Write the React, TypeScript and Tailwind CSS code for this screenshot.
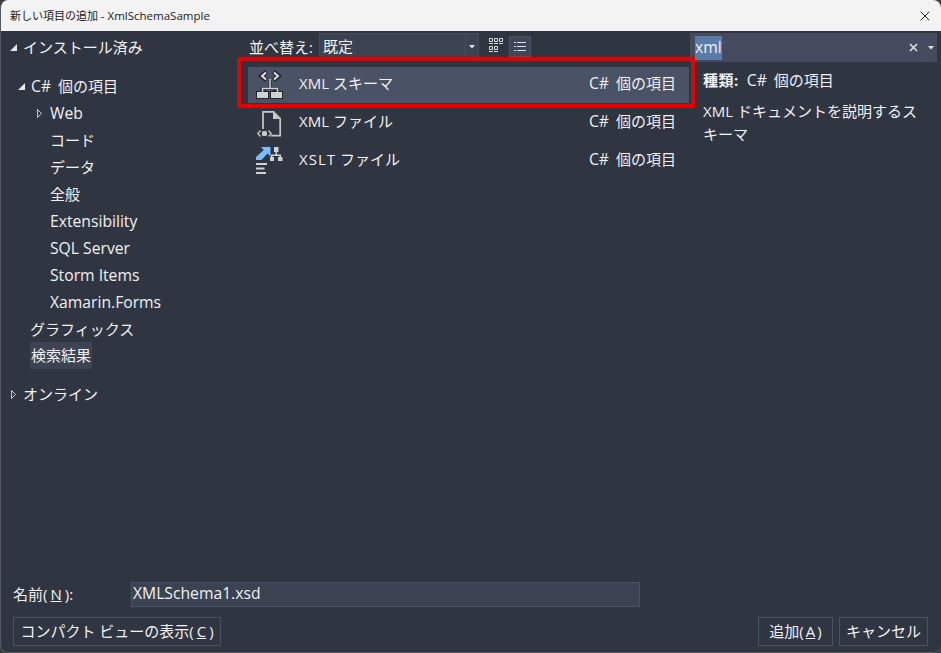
import type { ReactNode } from "react";
import { X } from "lucide-react";

const font = { fontFamily: '"Open Sans", "Noto Sans CJK JP", sans-serif' };

function Tri({ open }: { open?: boolean }) {
  if (open) {
    return (
      <svg width="9" height="9" viewBox="0 0 9 9" className="shrink-0">
        <path d="M8 1V8H1Z" fill="#e6e8ec" />
      </svg>
    );
  }
  return (
    <svg width="7" height="11" viewBox="0 0 7 11" className="shrink-0">
      <path d="M1.500 1.500L5.500 5.500L1.500 9.500Z" fill="none" stroke="#c9ccd2" strokeWidth="1" />
    </svg>
  );
}

// latin runs sit slightly wider than the CJK text around them
function Latin({ children }: { children: ReactNode }) {
  return <span className="text-[15.7px]">{children}</span>;
}

function CsItems() {
  return (
    <span>
      <Latin>C#</Latin>
      <span className="ml-[7px]">個の項目</span>
    </span>
  );
}

function TreeItem({ label, selected }: { label: ReactNode; selected?: boolean }) {
  return (
    <div className="h-[27px] pl-[49px] flex items-center text-[15px] text-[#f1f1f1]">
      {selected ? <span className="bg-[#3d4353] px-px h-[27px] -ml-5 flex items-center">{label}</span> : label}
    </div>
  );
}

function SchemaIcon() {
  return (
    <svg width="30" height="30" viewBox="0 0 30 30">
      <path d="M1 29V21H5.500V17.500H13.500V10H16.500V17.500H24V21H28V29H15V21H18V20H11V21H14V29Z" fill="#23262f" />
      <path d="M11.500 1.800L6.500 6L11.500 10.200M18.500 1.800L23.500 6L18.500 10.200" fill="none" stroke="#23262f" strokeWidth="4.500" />
      <path d="M2 22H13V28H2ZM16 22H27V28H16Z" fill="#d2d2d2" />
      <path d="M15 9V18.500M7.500 22V18.500H22.500V22" fill="none" stroke="#d2d2d2" strokeWidth="1.500" />
      <path d="M11 2.500L7 6L11 9.500M19 2.500L23 6L19 9.500" fill="none" stroke="#e0e0e0" strokeWidth="2" />
    </svg>
  );
}

function FileIcon() {
  return (
    <svg width="30" height="30" viewBox="0 0 30 30">
      <path d="M8 22V4.800H18.500L25.200 11.500V28.700H16" fill="none" stroke="#c8c8c8" strokeWidth="1.700" />
      <path d="M18 5V12H25Z" fill="#c8c8c8" />
      <path d="M5.500 23.500L2.800 26.500L5.500 29.500M13.500 23.500L16.200 26.500L13.500 29.500" fill="none" stroke="#c8c8c8" strokeWidth="1.300" />
      <rect x="7" y="24" width="5" height="5" rx="1.500" fill="#c8c8c8" />
    </svg>
  );
}

function XsltIcon() {
  return (
    <svg width="30" height="30" viewBox="0 0 30 30">
      <path d="M6 2H15.500V11.500L12.500 8.500L6.500 15H1V12L8.800 5Z" fill="#75beff" />
      <path d="M19 2H23.500V7H22V9.500H26V12H27.500V16H23V12H24.500V11H17.500V12H19V16H15V12H16V9.500H20.500V7H19Z" fill="#d2d2d2" />
      <path d="M1 18H12V20H1ZM1 22.500H9.500V24.500H1ZM1 27H11V29H1Z" fill="#d2d2d2" />
    </svg>
  );
}

function TemplateRow({ icon, name, selected, height }: { icon: ReactNode; name: ReactNode; selected?: boolean; height: string }) {
  return (
    <div className={"flex items-center text-[15px] text-[#f1f1f1] pl-[7px] pr-[13px] " + height + " " + (selected ? "bg-[#4a5265]" : "")}>
      <div className="w-[30px] h-[30px] shrink-0">{icon}</div>
      <span className={"ml-[14px] " + (selected ? "-mt-[4px]" : "-mt-[2px]")}>{name}</span>
      <span className={"ml-auto " + (selected ? "-mt-[3px]" : "mt-0")}>
        <CsItems />
      </span>
    </div>
  );
}

function CaretDown() {
  return (
    <svg width="6" height="4" viewBox="0 0 6 4">
      <path d="M0 0H6L3 3.500Z" fill="#e0e0e0" />
    </svg>
  );
}

export default function App() {
  return (
    <div className="w-[941px] h-[653px] bg-[#3b3d42]" style={font}>
      <div className="w-full h-full rounded-lg overflow-hidden border-l border-b border-[#565a63] flex flex-col bg-[#2f3541] relative">
        <div className="h-[31px] bg-[#f3f3f3] flex items-center pl-[9px] pr-[8px] text-[#1b1b1b] text-[11px] shrink-0">
          <span>
            新しい項目の追加 <span className="text-[11.5px]">- XmlSchemaSample</span>
          </span>
          <X className="ml-auto" size={16} strokeWidth={1.500} color="#222" />
        </div>

        <div className="flex flex-1 min-h-0">
          <div className="w-[238px] shrink-0 pt-[3px]">
            <div className="h-[27px] flex items-center pl-[8px] gap-[5px] text-[15px] text-[#f1f1f1]">
              <Tri open />
              インストール済み
            </div>
            <div className="h-[27px] mt-[12px] flex items-center pl-[16px] gap-[5px] text-[15px] text-[#f1f1f1]">
              <Tri open />
              <CsItems />
            </div>
            <div className="h-[27px] flex items-center pl-[35px] gap-[7px] text-[15px] text-[#f1f1f1]">
              <Tri />
              <Latin>Web</Latin>
            </div>
            <TreeItem label="コード" />
            <TreeItem label="データ" />
            <TreeItem label="全般" />
            <TreeItem label={<Latin>Extensibility</Latin>} />
            <TreeItem label={<Latin>SQL Server</Latin>} />
            <TreeItem label={<Latin>Storm Items</Latin>} />
            <TreeItem label={<Latin>Xamarin.Forms</Latin>} />
            <div className="h-[26px] pl-[29px] flex items-center text-[15px] text-[#f1f1f1]">グラフィックス</div>
            <TreeItem label="検索結果" selected />
            <div className="h-[27px] mt-[12px] flex items-center pl-[9px] gap-[6px] text-[15px] text-[#f1f1f1]">
              <Tri />
              オンライン
            </div>
          </div>

          <div className="w-[451px] shrink-0">
            <div className="h-[36px] flex items-start pt-[2px] text-[15px] text-[#f1f1f1]">
              <span className="ml-[10px] mt-[3px]">並べ替え:</span>
              <div className="ml-[6px] w-[160px] h-[28px] border border-[#454c5e] bg-[#3b4252] flex items-center">
                <span className="pl-[3px] flex-1 -mt-[2px]">既定</span>
                <div className="w-[13px] h-full border-l border-[#454c5e] flex items-center justify-center">
                  <CaretDown />
                </div>
              </div>
              <div className="ml-[7px] mt-[2px] w-[21px] h-[21px] flex items-center justify-center">
                <svg width="14" height="15" viewBox="0 0 14 15">
                  <path d="M.5 .5h3v3h-3zM5.500 .5h3v3h-3zM10.500 .5h3v3h-3zM.5 8.500h3v3h-3zM5.500 8.500h3v3h-3z" fill="none" stroke="#d8d8d8" strokeWidth="1" />
                  <path d="M0 5h4v1H0zM5 5h4v1H5zM10 5h4v1h-4zM0 13h4v1H0zM5 13h4v1H5z" fill="#d8d8d8" />
                </svg>
              </div>
              <div className="ml-[2px] mt-[3px] w-[22px] h-[21px] bg-[#3f4657] border border-[#4a5265] flex items-center justify-center">
                <svg width="12" height="11" viewBox="0 0 12 11">
                  <path d="M0 1h2v1H0zM3 1h9v1H3zM0 5h2v1H0zM3 5h9v1H3zM0 9h2v1H0zM3 9h9v1H3z" fill="#e0e0e0" />
                </svg>
              </div>
            </div>
            <div className="pl-[9px] pr-[1px]">
              <TemplateRow height="h-[36px]" icon={<SchemaIcon />} name="XML スキーマ" selected />
              <TemplateRow height="h-[38px]" icon={<FileIcon />} name="XML ファイル" />
              <TemplateRow
                height="h-[38px]"
                icon={<XsltIcon />}
                name={
                  <>
                    <span className="tracking-[1px]">XSLT</span> ファイル
                  </>
                }
              />
            </div>
          </div>

          <div className="flex-1 min-w-0 pr-[4px] pt-[2px]">
            <div className="h-[29px] border border-[#454c5e] bg-[#444b5e] flex items-center text-[#f1f1f1] text-[15px]">
              <span className="ml-[4px] bg-[#5a7ba8] leading-[23px] h-[24px]">
                <Latin>xml</Latin>
              </span>
              <svg width="9" height="9" viewBox="0 0 9 9" className="ml-auto mr-[6px]">
                <path d="M1 1L8 8M8 1L1 8" stroke="#e0e0e0" strokeWidth="1.600" />
              </svg>
              <div className="w-[12px] h-full border-l border-[#454c5e] flex items-center justify-center">
                <CaretDown />
              </div>
            </div>
            <div className="pl-[13px] pt-[7px] pr-[7px] text-[15px] text-[#f1f1f1] leading-[23px]">
              <div>
                <span className="font-bold tracking-[0.5px]">種類:</span>
                <span className="ml-[8px]">
                  <CsItems />
                </span>
              </div>
              <div className="mt-[8px]">XML ドキュメントを説明するスキーマ</div>
            </div>
          </div>
        </div>

        <div className="h-[71px] shrink-0 pl-[12px] pr-[13px]">
          <div className="flex items-center h-[26px] text-[15px] text-[#f1f1f1]">
            <span className="w-[118px]">
              名前(<span className="underline mx-[3px]">N</span>):
            </span>
            <div className="w-[509px] h-[25px] bg-[#3b4252] border border-[#4a5265] flex items-center pl-[1px]">
              <Latin>XMLSchema1.xsd</Latin>
            </div>
          </div>
          <div className="flex mt-[10px] text-[15px] text-[#f1f1f1]">
            <div className="h-[29px] w-[208px] border border-[#4a5265] flex items-center justify-center">
              <span>
                コンパクト ビューの表示(<span className="underline mx-[3px]">C</span>)
              </span>
            </div>
            <div className="ml-auto h-[29px] w-[75px] border border-[#4a5265] flex items-center justify-center">
              <span>
                追加(<span className="underline mx-[2px]">A</span>)
              </span>
            </div>
            <div className="ml-[6px] h-[29px] w-[89px] border border-[#4a5265] flex items-center justify-center">キャンセル</div>
          </div>
        </div>

        {/* red callout drawn over the list */}
        <div className="absolute left-[236px] top-[57px] w-[458px] h-[51px] border-[4px] border-[#e60000] rounded-[2px] pointer-events-none" />
      </div>
    </div>
  );
}
